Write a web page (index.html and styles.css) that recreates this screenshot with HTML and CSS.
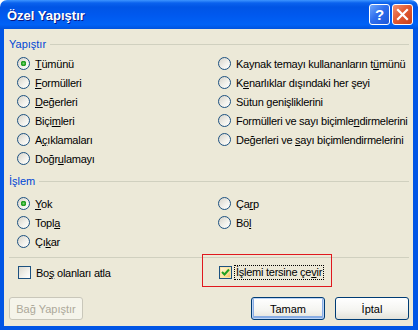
FILE: index.html
```html
<!DOCTYPE html>
<html lang="tr">

<head>
    <meta charset="UTF-8">
    <meta name="viewport" content="width=device-width, initial-scale=1.0">
    <title>Özel Yapıştır</title>
    <link rel="stylesheet" href="styles.css">
</head>

<body>
    <div class="window">
        <div class="titlebar">
            <span class="title">Özel Yapıştır</span>
            <div class="caption">
                <button class="cap help">?</button>
                <button class="cap close">
                    <svg width="13" height="13" viewBox="0 0 13 13">
                        <path d="M2 2 L11 11 M11 2 L2 11" stroke="#fff" stroke-width="2.2" stroke-linecap="square" fill="none" />
                    </svg>
                </button>
            </div>
        </div>

        <div class="client">
            <div class="group-head"><span>Yapıştır</span></div>
            <div class="options paste">
                <label class="opt"><i class="radio on"></i><span><u>T</u>ümünü</span></label>
                <label class="opt"><i class="radio"></i><span><u>F</u>ormülleri</span></label>
                <label class="opt"><i class="radio"></i><span><u>D</u>eğerleri</span></label>
                <label class="opt"><i class="radio"></i><span>Biçi<u>m</u>leri</span></label>
                <label class="opt"><i class="radio"></i><span>A<u>ç</u>ıklamaları</span></label>
                <label class="opt"><i class="radio"></i><span>Doğr<u>u</u>lamayı</span></label>
                <label class="opt"><i class="radio"></i><span>Kaynak temayı kullananların t<u>ü</u>münü</span></label>
                <label class="opt"><i class="radio"></i><span>K<u>e</u>narlıklar dışındaki her şeyi</span></label>
                <label class="opt"><i class="radio"></i><span>Sütun <u>g</u>enişliklerini</span></label>
                <label class="opt"><i class="radio"></i><span>Formülleri ve sayı biçimle<u>n</u>dirmelerini</span></label>
                <label class="opt"><i class="radio"></i><span>Değerleri ve <u>s</u>ayı biçimlendirmelerini</span></label>
            </div>

            <div class="group-head second"><span>İşlem</span></div>
            <div class="options ops">
                <label class="opt"><i class="radio on"></i><span><u>Y</u>ok</span></label>
                <label class="opt"><i class="radio"></i><span>Topl<u>a</u></span></label>
                <label class="opt"><i class="radio"></i><span>Çı<u>k</u>ar</span></label>
                <label class="opt"><i class="radio"></i><span>Ça<u>r</u>p</span></label>
                <label class="opt"><i class="radio"></i><span>Bö<u>l</u></span></label>
            </div>

            <div class="separator"></div>

            <div class="options checks">
                <label class="opt"><i class="check"></i><span>Bo<u>ş</u> olanları atla</span></label>
                <label class="opt marked">
                    <i class="check on">
                        <svg width="11" height="11" viewBox="0 0 11 11">
                            <path d="M2 5 L4.5 7.5 L9 2.5" stroke="#21a121" stroke-width="2" fill="none" />
                        </svg>
                    </i>
                    <span class="focus">İşlemi tersine çe<u>v</u>ir</span>
                    <span class="highlight"></span>
                </label>
            </div>

            <div class="buttons">
                <button class="btn" disabled>Bağ Yapıştır</button>
                <div class="right">
                    <button class="btn default">Tamam</button>
                    <button class="btn">İptal</button>
                </div>
            </div>
        </div>
    </div>
</body>

</html>
```

FILE: styles.css
```css
* {
    margin: 0;
    padding: 0;
    box-sizing: border-box;
}

body {
    background-color: #fff;
    font: 11px "Liberation Sans", Arial, sans-serif;
    color: #000;
}

.window {
    width: 418px;
    height: 330px;
    display: flex;
    flex-direction: column;
}

.titlebar {
    height: 29px;
    flex: none;
    display: flex;
    align-items: center;
    justify-content: space-between;
    padding: 0 5px 0 7px;
    border-radius: 7px 7px 0 0;
    background: linear-gradient(#3d95ff 0, #0a62ee 3px, #0055e5 7px, #0058ee 50%, #0062f6 85%, #0053dd 100%);
}

.title {
    font: bold 13px "Liberation Sans", Arial, sans-serif;
    color: #fff;
    text-shadow: 1px 1px #0a1883;
    margin-top: 1px;
}

.caption {
    display: flex;
    gap: 2px;
}

.cap {
    width: 21px;
    height: 21px;
    border: 1px solid #fff;
    border-radius: 3px;
    display: flex;
    align-items: center;
    justify-content: center;
    color: #fff;
    font: bold 15px "Liberation Sans", Arial, sans-serif;
}

.help {
    background: linear-gradient(135deg, #6fa7fb 0, #2f6fee 45%, #1d57d8 100%);
}

.close {
    background: linear-gradient(135deg, #f39274 0, #e35b32 45%, #c8401b 100%);
}

.client {
    flex: 1;
    background-color: #ece9d8;
    border: solid #0055e5;
    border-width: 0 5px 4px 4px;
    padding: 8px 4px 6px 5px;
    display: flex;
    flex-direction: column;
}

.group-head {
    display: flex;
    align-items: center;
    height: 14px;
    color: #0046d5;
}

.group-head::after {
    content: '';
    flex: 1;
    height: 1px;
    margin-left: 4px;
    background-color: #d0d0bf;
}

.group-head.second {
    margin-top: 6px;
}

.options {
    display: grid;
    grid-template-columns: 201px 1fr;
    grid-auto-flow: column;
    grid-auto-rows: 19px;
    padding-left: 8px;
}

.paste {
    grid-template-rows: repeat(6, 19px);
    margin-top: 3px;
}

.ops {
    grid-template-rows: repeat(3, 19px);
    margin-top: 6px;
}

.checks {
    grid-template-rows: 19px;
    margin-top: 5px;
}

.opt {
    display: flex;
    align-items: center;
    gap: 5px;
    white-space: nowrap;
    letter-spacing: -0.25px;
}

.radio {
    width: 13px;
    height: 13px;
    flex: none;
    border-radius: 50%;
    border: 1px solid #1c5180;
    background: linear-gradient(135deg, #d6d3ca 0, #f3f2ed 60%, #fff 100%);
}

.radio.on {
    background: radial-gradient(circle, #7ada76 0, #2ba92a 1.6px, #1f961f 2.6px, transparent 3px), linear-gradient(135deg, #d6d3ca 0, #f3f2ed 60%, #fff 100%);
}

.check {
    width: 13px;
    height: 13px;
    flex: none;
    margin-left: 1px;
    border: 1px solid #1c5180;
    background: linear-gradient(135deg, #dcd9cf 0, #f3f2ed 60%, #fff 100%);
    display: flex;
    align-items: center;
    justify-content: center;
}

.check.on {
    background: linear-gradient(135deg, #fff7dc 0, #fde3a0 60%, #f7b84a 100%);
    box-shadow: inset 0 0 0 1px #fbe5a8;
}

.separator {
    height: 1px;
    margin-top: 6px;
    background-color: #d0d0bf;
}

.marked {
    position: relative;
    gap: 3px;
}

.focus {
    outline: 1px dotted #000;
    padding: 0 1px;
    line-height: 13px;
}

.highlight {
    position: absolute;
    left: -16px;
    top: -9px;
    width: 130px;
    height: 33px;
    border: 1px solid #e0181e;
}

.buttons {
    margin-top: 15px;
    display: flex;
    justify-content: space-between;
}

.buttons .right {
    display: flex;
    gap: 10px;
}

.btn {
    width: 74px;
    height: 23px;
    border: 1px solid #003c74;
    border-radius: 3px;
    background: linear-gradient(#fff 0, #f4f4f0 60%, #e3e2da 100%);
    font: 11px "Liberation Sans", Arial, sans-serif;
    color: #000;
}

.btn.default {
    box-shadow: inset 0 0 0 1px #bcd4f6, inset 0 -1px 0 2px #89ade4;
}

.btn:disabled {
    border-color: #c9c7ba;
    background: #f5f4ea;
    color: #aca899;
}
```
